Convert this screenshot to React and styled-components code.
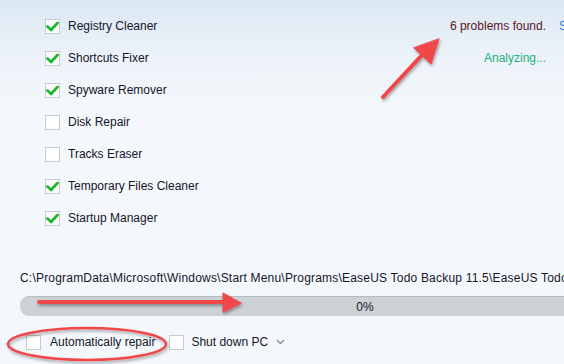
import React from "react";
import styled, { createGlobalStyle } from "styled-components";

const Global = createGlobalStyle`
  html, body {
    margin: 0;
    padding: 0;
  }
  body {
    font-family: "Liberation Sans", Arial, sans-serif;
    font-size: 12px;
    color: #15152a;
  }
`;

const Page = styled.div`
  position: relative;
  width: 564px;
  height: 364px;
  overflow: hidden;
  background: linear-gradient(to bottom, #dbe8f3 0px, #edf3f9 60px, #f4f8fc 110px, #f4f8fc 100%);
`;

const Top = styled.div`
  display: flex;
  justify-content: space-between;
  padding-top: 10px;
  height: 246px;
`;

const List = styled.div`
  display: flex;
  flex-direction: column;
  padding-left: 45px;
`;

const Row = styled.label`
  display: flex;
  align-items: center;
  gap: 8px;
  height: 32px;
`;

const Box = styled.span`
  width: 13px;
  height: 13px;
  border: 1px solid #c9ccce;
  background: #fff;
  display: flex;
  align-items: center;
  justify-content: center;
  flex-shrink: 0;
`;

const Status = styled.div`
  display: flex;
  flex-direction: column;
  align-items: flex-end;
  width: 200px;
`;

const StatusLine = styled.div`
  display: flex;
  align-items: center;
  height: 32px;
  gap: 13px;
  margin-right: ${(p) => p.$shift || 0}px;
`;

const Found = styled.span`
  color: #5c1628;
`;

const Link = styled.span`
  color: #3b7de6;
  width: 5px;
  overflow: hidden;
`;

const Analyzing = styled.span`
  color: #1fb07c;
`;

const Bottom = styled.div`
  padding-left: 20px;
`;

const Path = styled.div`
  white-space: nowrap;
  height: 20px;
  line-height: 20px;
  margin-top: 12px;
  letter-spacing: 0.2px;
`;

const Bar = styled.div`
  width: 690px;
  height: 20px;
  margin-top: 8px;
  border-radius: 9px 0 0 9px;
  background: #ccd1d4;
  border-top: 1px solid #b7bcbf;
  box-sizing: border-box;
  display: flex;
  align-items: center;
  justify-content: center;
`;

const Options = styled.div`
  display: flex;
  align-items: center;
  height: 30px;
  margin-top: 11px;
  padding-left: 6px;
`;

const Option = styled.label`
  display: flex;
  align-items: center;
  gap: ${(p) => p.$inner || 9}px;
  margin-right: ${(p) => p.$gap || 0}px;
`;

const Chevron = styled.span`
  margin-left: 8px;
  display: flex;
  align-items: center;
`;

const Overlay = styled.svg`
  position: absolute;
  left: 0;
  top: 0;
  pointer-events: none;
`;

const Check = () => (
  <svg width="13" height="11" viewBox="0 0 13 11">
    <path d="M1.5 5.5 L5 9 L11.5 2" fill="none" stroke="#1db82b" strokeWidth="2.8" strokeLinecap="round" strokeLinejoin="round" />
  </svg>
);

const items = [
  ["Registry Cleaner", true],
  ["Shortcuts Fixer", true],
  ["Spyware Remover", true],
  ["Disk Repair", false],
  ["Tracks Eraser", false],
  ["Temporary Files Cleaner", true],
  ["Startup Manager", true],
];

export default function App() {
  return (
    <Page>
      <Global />
      <Top>
        <List>
          {items.map(([name, on]) => (
            <Row key={name}>
              <Box>{on && <Check />}</Box>
              {name}
            </Row>
          ))}
        </List>
        <Status>
          <StatusLine>
            <Found>6 problems found.</Found>
            <Link>Stop</Link>
          </StatusLine>
          <StatusLine $shift={18}>
            <Analyzing>Analyzing...</Analyzing>
          </StatusLine>
        </Status>
      </Top>
      <Bottom>
        <Path>C:\ProgramData\Microsoft\Windows\Start Menu\Programs\EaseUS Todo Backup 11.5\EaseUS Todo Backup.lnk</Path>
        <Bar>0%</Bar>
        <Options>
          <Option $gap={14}>
            <Box />
            Automatically repair
          </Option>
          <Option $inner={7}>
            <Box />
            Shut down PC
          </Option>
          <Chevron>
            <svg width="9" height="6" viewBox="0 0 9 6">
              <path d="M1 1 L4.5 4.5 L8 1" fill="none" stroke="#8a8f94" strokeWidth="1.3" />
            </svg>
          </Chevron>
        </Options>
      </Bottom>
      <Overlay width="564" height="364" viewBox="0 0 564 364">
        <defs>
          <filter id="sh" x="-20%" y="-20%" width="140%" height="160%">
            <feDropShadow dx="1" dy="2" stdDeviation="1.5" floodColor="#000" floodOpacity="0.35" />
          </filter>
        </defs>
        <g filter="url(#sh)" fill="#f0474b" stroke="#f0474b" strokeLinecap="round">
          <line x1="383" y1="97" x2="422" y2="55" strokeWidth="4" />
          <polygon points="439,39 431,64 414,48" strokeWidth="1" strokeLinejoin="round" />
          <line x1="39" y1="302" x2="226" y2="302" strokeWidth="4" />
          <polygon points="241,303 223,293 223,312" strokeWidth="1" strokeLinejoin="round" />
          <ellipse cx="87" cy="344" rx="79" ry="16" fill="none" strokeWidth="2.5" />
        </g>
      </Overlay>
    </Page>
  );
}
